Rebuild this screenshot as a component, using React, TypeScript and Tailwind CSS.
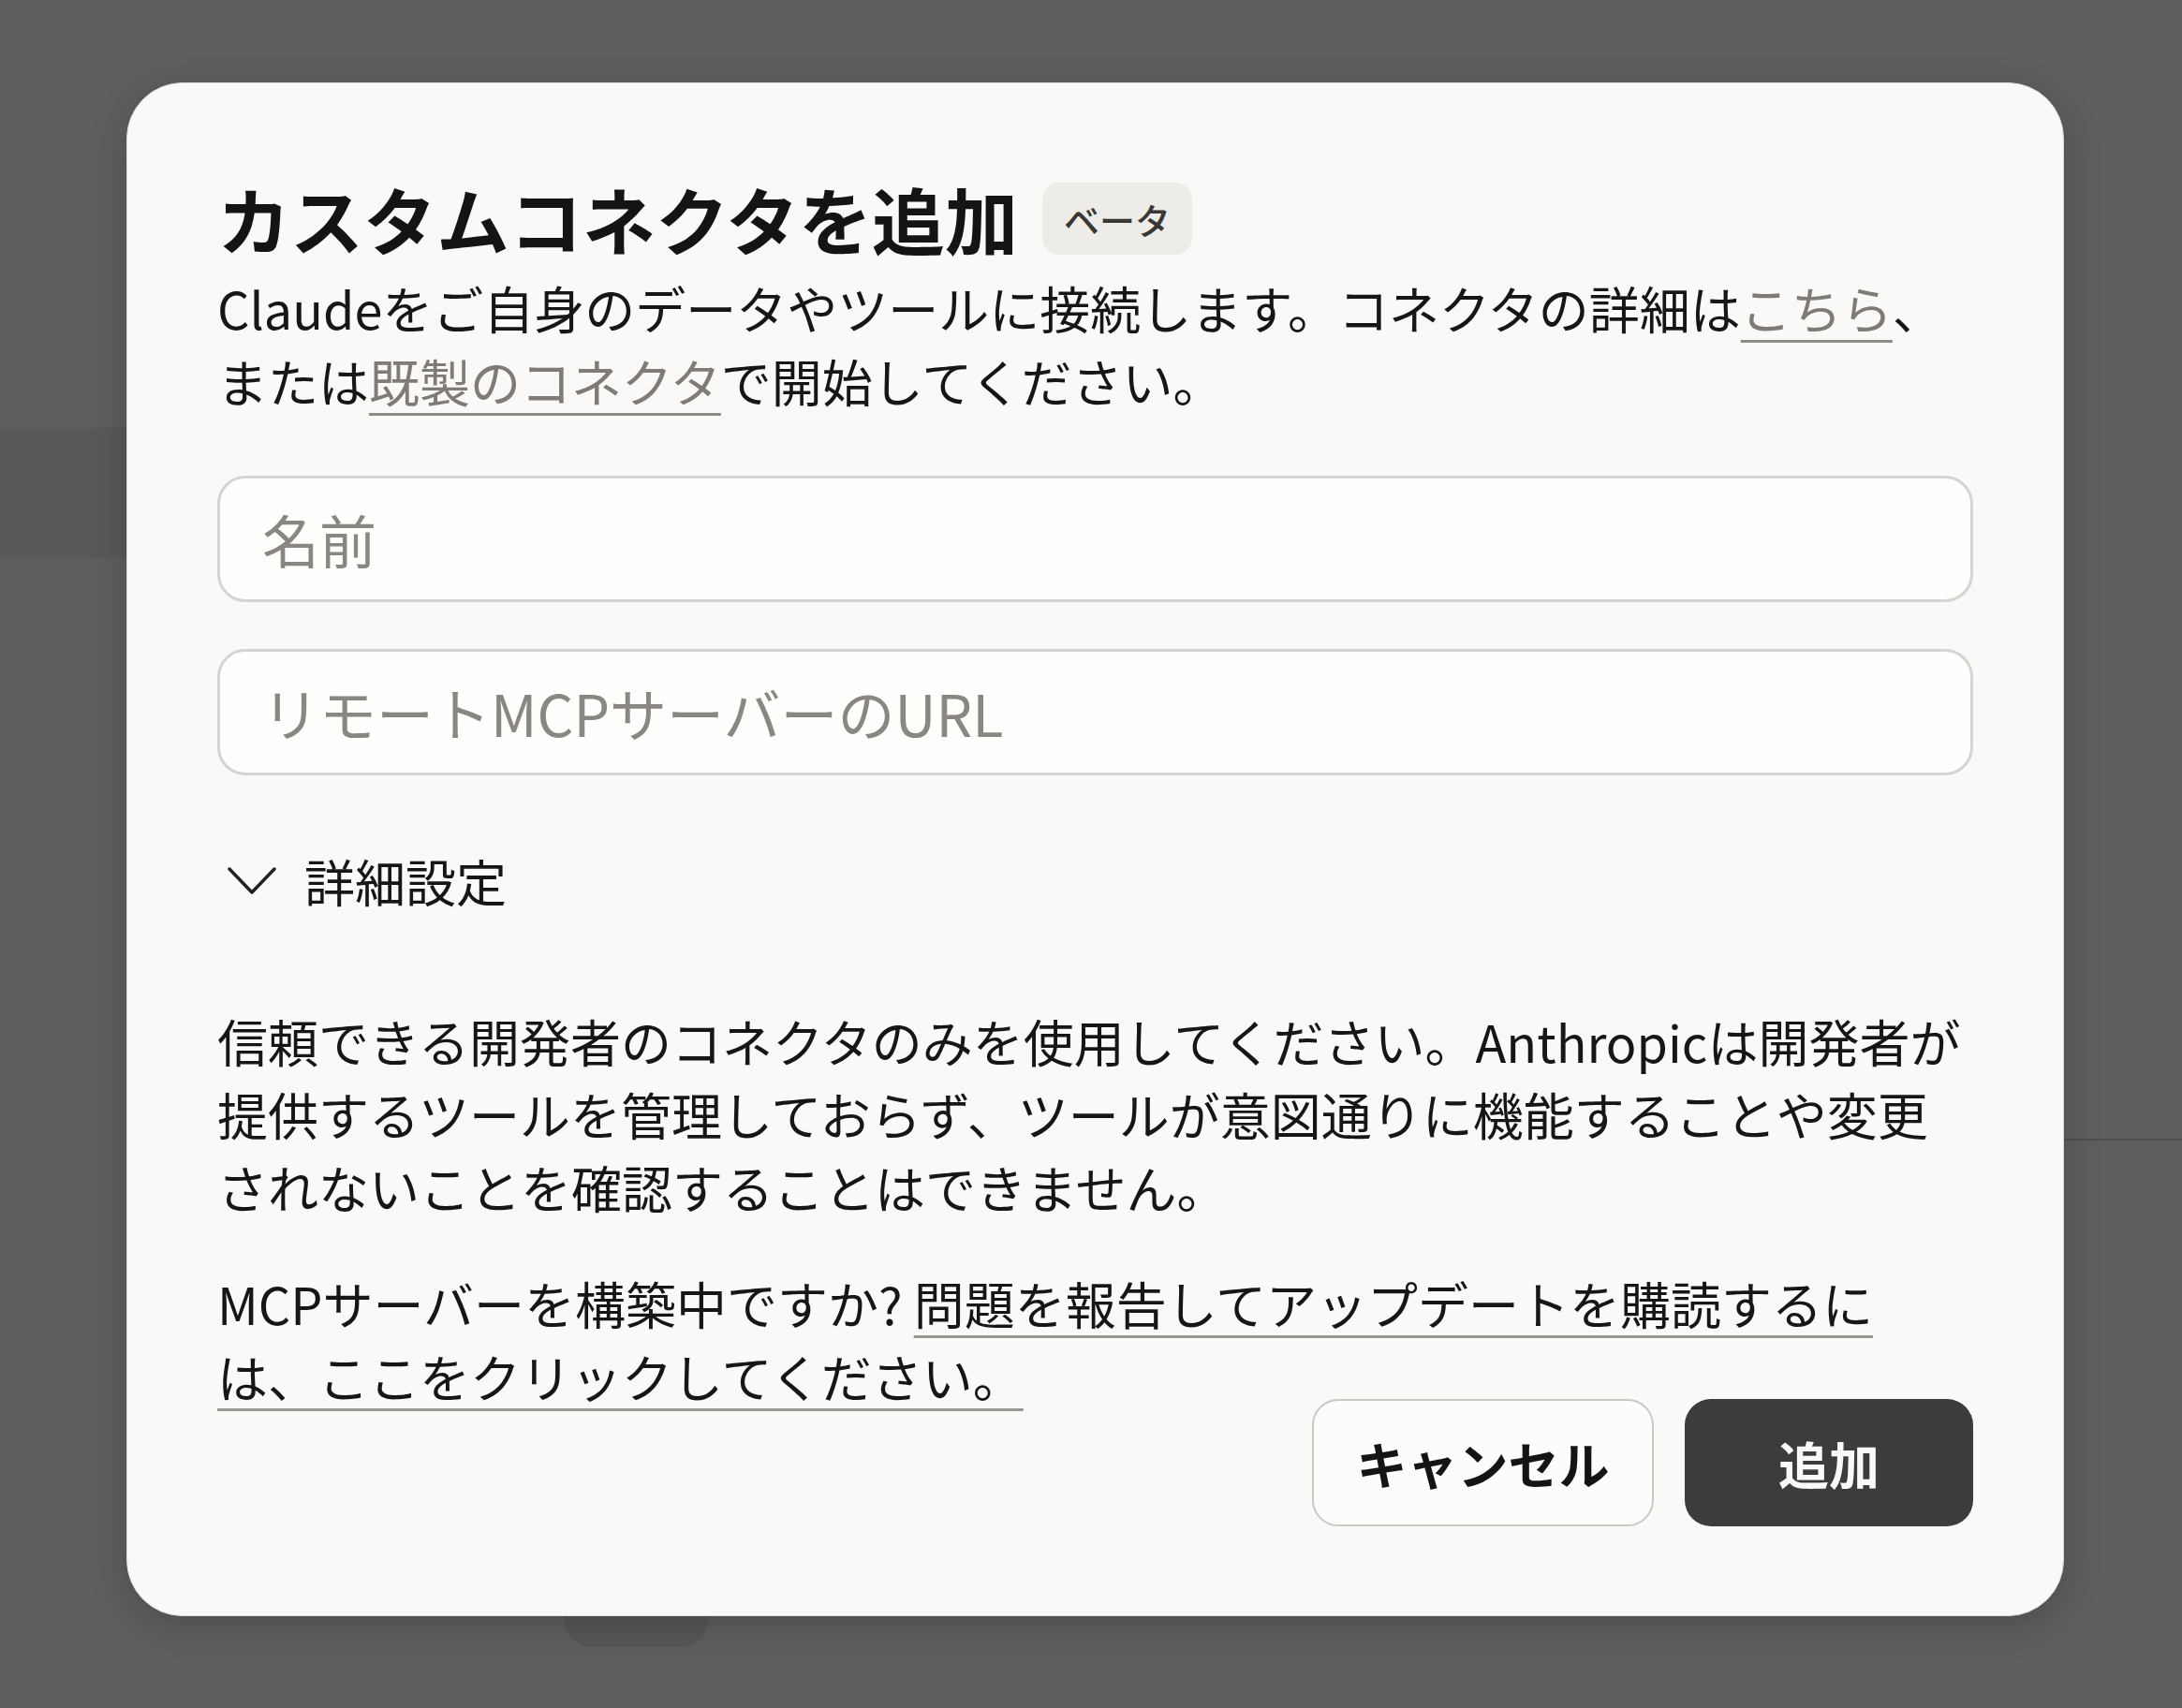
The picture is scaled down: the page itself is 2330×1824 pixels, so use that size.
import React from "react";

const font = { fontFamily: '"Noto Sans CJK JP", "Noto Sans", sans-serif' };

export default function App() {
  return (
    <div
      className="relative min-h-[1824px] overflow-hidden bg-[#5f5e5d] pt-[88px] pl-[135px] text-[#161615]"
      style={font}
    >
      {/* page behind the overlay */}
      <div className="absolute left-0 top-[457px] h-[138px] w-[135px] bg-[#5a5856]" />
      <div className="absolute right-0 top-[1216px] h-[2px] w-[126px] bg-[#4e4d4c]" />
      <div className="absolute left-[603px] top-[1690px] h-[67px] w-[153px] rounded-b-[30px] bg-[#585756] shadow-[0_1px_2px_rgba(0,0,0,0.15)]" />

      <div className="relative w-[2069px] rounded-[60px] border border-[#dcdad6] bg-[#faf9f7] px-[96px] pt-[96px] pb-[95px] shadow-[0_10px_40px_rgba(0,0,0,0.18)]">
        <div className="flex h-[96px] items-center gap-[26px]">
          <h1 className="text-[78px] font-bold leading-[96px] text-[#141413]">
            カスタムコネクタを追加
          </h1>
          <span className="flex h-[77px] items-center rounded-[18px] bg-[#eeece9] px-[23px] text-[38px] font-medium text-[#3a3835]">
            ベータ
          </span>
        </div>

        <p className="mt-[9px] text-[54px] leading-[78px]">
          Claudeをご自身のデータやツールに接続します。コネクタの詳細は
          <a className="text-[#7f7b76] underline decoration-[#8f8b86] decoration-[3px] underline-offset-[11px]">
            こちら
          </a>
          、<br />
          または
          <a className="text-[#7f7b76] underline decoration-[#8f8b86] decoration-[3px] underline-offset-[11px]">
            既製のコネクタ
          </a>
          で開始してください。
        </p>

        <div className="mt-[62px] flex flex-col gap-[50px]">
          <input
            placeholder="名前"
            className="h-[135px] w-full rounded-[30px] border-[3px] border-[#d6d4d0] bg-[#fefefd] px-[45px] text-[61px] outline-none placeholder:text-[#8a8681]"
          />
          <input
            placeholder="リモートMCPサーバーのURL"
            className="h-[135px] w-full rounded-[30px] border-[3px] border-[#d6d4d0] bg-[#fefefd] px-[45px] text-[61px] outline-none placeholder:text-[#8a8681]"
          />
        </div>

        <button className="mt-[74px] flex h-[78px] items-center gap-[30px] text-[54px] leading-[78px]">
          <svg width="52" height="30" viewBox="0 0 52 30" className="ml-[11px]" fill="none">
            <polyline points="2,2 26,27 50,2" stroke="#222221" strokeWidth="3.5" strokeLinecap="round" strokeLinejoin="round" />
          </svg>
          <span>詳細設定</span>
        </button>

        <p className="mt-[93px] text-[54px] leading-[78px]">
          信頼できる開発者のコネクタのみを使用してください。Anthropicは開発者が
          <br />
          提供するツールを管理しておらず、ツールが意図通りに機能することや変更
          <br />
          されないことを確認することはできません。
        </p>

        <p className="mt-[46px] text-[54px] leading-[78px]">
          MCPサーバーを構築中ですか?{" "}
          <a className="underline decoration-[#9a9792] decoration-[3px] underline-offset-[11px]">
            問題を報告してアップデートを購読するに
            <br />
            は、ここをクリックしてください。
          </a>
        </p>

        <div className="-mt-[15px] flex justify-end gap-[33px]">
          <button className="h-[136px] w-[365px] rounded-[28px] border-2 border-[#cbc8c4] bg-[#fdfcfb] text-[54px] font-bold text-[#141413]">
            キャンセル
          </button>
          <button className="h-[136px] w-[308px] rounded-[28px] bg-[#3d3c3a] text-[54px] font-bold text-[#faf9f7]">
            追加
          </button>
        </div>
      </div>
    </div>
  );
}
